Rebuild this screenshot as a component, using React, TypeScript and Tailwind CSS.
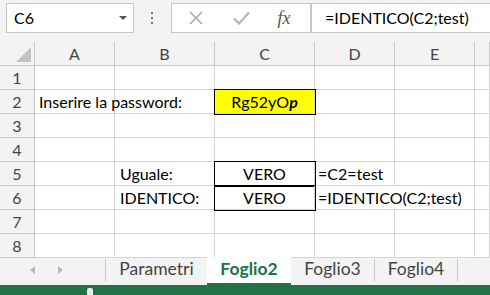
import React from "react";

const font = { fontFamily: "Lato, 'Open Sans', sans-serif" };

function Cell({ children, className = "" }: { children?: React.ReactNode; className?: string }) {
  return (
    <div className={`h-[24px] border-r border-b border-[#d4d4d4] flex items-center text-[16px] text-black leading-none whitespace-nowrap ${className}`}>
      {children}
    </div>
  );
}

function RowHead({ n }: { n: number }) {
  return (
    <div className="h-[24px] border-r border-b border-[#c8c8c8] bg-[#f3f3f3] flex items-center justify-center text-[16px] text-[#444] leading-none">
      {n}
    </div>
  );
}

export default function App() {
  const cols = ["A", "B", "C", "D", "E", ""];
  return (
    <div className="w-[490px] h-[295px] overflow-hidden bg-white" style={font}>
      {/* formula bar */}
      <div className="h-[42px] bg-[#f3f3f3] flex items-start pt-[3px]">
        <div className="ml-[6px] w-[128px] h-[30px] bg-white border border-[#c6c6c6] flex items-center justify-between pl-[7px] pr-[6px]">
          <span className="text-[16px] text-black leading-none">C6</span>
          <svg width="8" height="5" viewBox="0 0 8 5"><path d="M0 0 L8 0 L4 4 Z" fill="#555" /></svg>
        </div>
        <div className="w-[37px] h-[30px] flex items-center justify-center">
          <svg width="3" height="12" viewBox="0 0 3 12"><rect x="0" y="0" width="2" height="2" fill="#777" /><rect x="0" y="5" width="2" height="2" fill="#777" /><rect x="0" y="10" width="2" height="2" fill="#777" /></svg>
        </div>
        <div className="w-[140px] h-[30px] bg-white border border-[#c6c6c6] flex items-center">
          <div className="w-[48px] flex justify-center">
            <svg width="14" height="14" viewBox="0 0 14 14"><path d="M1 1 L13 13 M13 1 L1 13" stroke="#a0a0a0" strokeWidth="1.4" /></svg>
          </div>
          <div className="w-[42px] flex justify-center">
            <svg width="17" height="14" viewBox="0 0 17 14"><path d="M1 7.5 L6 12.5 L16 1.5" stroke="#b4b4b4" strokeWidth="2.2" fill="none" /></svg>
          </div>
          <div className="w-[44px] flex justify-center">
            <span className="text-[18px] italic text-[#555] leading-none" style={{ fontFamily: "'Liberation Serif', serif" }}>fx</span>
          </div>
        </div>
        <div className="flex-1 h-[30px] bg-white border border-[#c6c6c6] border-r-0 flex items-center pl-[13px]">
          <span className="text-[16px] text-black leading-none whitespace-nowrap">=IDENTICO(C2;test)</span>
        </div>
      </div>

      {/* grid */}
      <div className="grid grid-cols-[35px_80px_100px_100px_80px_80px_1fr]">
        <div className="h-[24px] border-r border-b border-[#c8c8c8] bg-[#f3f3f3] flex items-end justify-end pr-[3px] pb-[3px]">
          <svg width="15" height="15" viewBox="0 0 15 15"><path d="M15 0 L15 15 L0 15 Z" fill="#c2c2c2" /></svg>
        </div>
        {cols.map((c, i) => (
          <div key={i} className="h-[24px] border-r border-b border-[#c8c8c8] bg-[#f3f3f3] flex items-center justify-center text-[16px] text-[#444] leading-none">
            {c}
          </div>
        ))}

        <RowHead n={1} />
        <Cell /><Cell /><Cell /><Cell /><Cell /><Cell />

        <RowHead n={2} />
        <Cell className="pl-[4px] overflow-visible text-[16.5px]">Inserire la password:</Cell>
        <Cell className="border-r-0" />
        <Cell className="relative z-10 justify-center bg-[#ffff00] shadow-[0_0_0_1px_#000]">
          Rg52yO<b className="italic font-bold">p</b>
        </Cell>
        <Cell /><Cell /><Cell />

        <RowHead n={3} />
        <Cell /><Cell /><Cell /><Cell /><Cell /><Cell />

        <RowHead n={4} />
        <Cell /><Cell /><Cell /><Cell /><Cell /><Cell />

        <RowHead n={5} />
        <Cell />
        <Cell className="pl-[5px]">Uguale:</Cell>
        <Cell className="relative z-10 justify-center shadow-[0_0_0_1px_#000]">VERO</Cell>
        <Cell className="pl-[3px]">=C2=test</Cell>
        <Cell /><Cell />

        <RowHead n={6} />
        <Cell />
        <Cell className="pl-[5px]">IDENTICO:</Cell>
        <Cell className="relative z-10 justify-center shadow-[0_0_0_1px_#000]">VERO</Cell>
        <Cell className="pl-[3px] border-r-0 overflow-visible">=IDENTICO(C2;test)</Cell>
        <Cell /><Cell />

        <RowHead n={7} />
        <Cell /><Cell /><Cell /><Cell /><Cell /><Cell />

        <RowHead n={8} />
        <Cell /><Cell /><Cell /><Cell /><Cell /><Cell />
      </div>

      {/* sheet tabs */}
      <div className="h-[27px] bg-[#f3f3f3] flex items-stretch text-[17.5px] leading-none">
        <div className="w-[105px] flex items-center pb-[3px]">
          <div className="w-[35px] flex justify-end">
            <svg width="5" height="8" viewBox="0 0 5 8"><path d="M5 0 L0 4 L5 8 Z" fill="#b8b8b8" /></svg>
          </div>
          <div className="w-[28px] flex justify-end">
            <svg width="5" height="8" viewBox="0 0 5 8"><path d="M0 0 L5 4 L0 8 Z" fill="#b8b8b8" /></svg>
          </div>
        </div>
        <div className="w-[102px] flex items-center justify-center border-l border-[#c8c8c8] mt-[1px] mb-[4px] pb-[2px] text-[#444]">Parametri</div>
        <div className="w-[84px] bg-white flex items-center justify-center font-bold text-[#217346] border-b-[2px] border-[#217346] -mt-px pb-[3px]">Foglio2</div>
        <div className="w-[84px] flex items-center justify-center border-r border-[#c8c8c8] mt-[1px] mb-[4px] pb-[2px] text-[#444]">Foglio3</div>
        <div className="w-[83px] flex items-center justify-center border-r border-[#c8c8c8] mt-[1px] mb-[4px] pb-[2px] text-[#444]">Foglio4</div>
      </div>

      {/* status bar */}
      <div className="h-[10px] bg-[#217346] relative">
        <div className="absolute left-[87px] top-[3px] w-[6px] h-[7px] bg-[#e8efe9] rounded-t-[2px]" />
      </div>
    </div>
  );
}
